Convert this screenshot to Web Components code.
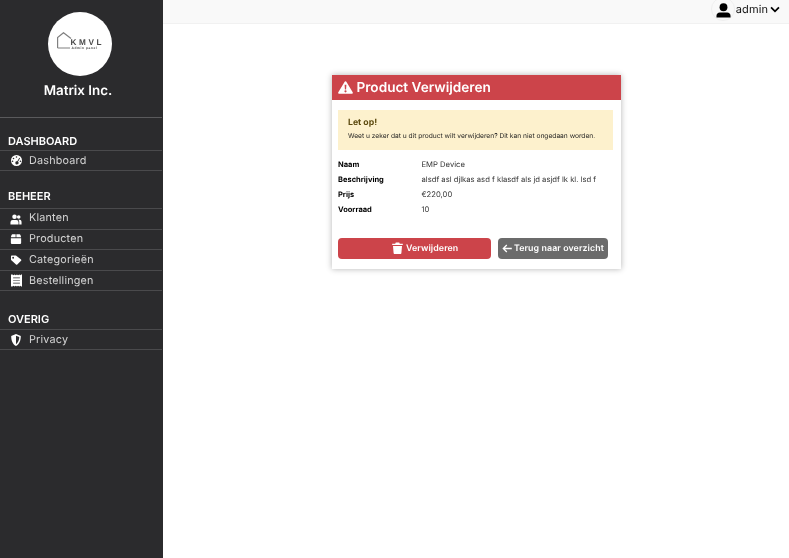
<!DOCTYPE html>
<html lang="nl"><head><meta charset="utf-8"><title>Product Verwijderen</title>
<style>
html,body{margin:0;height:100%;font-family:Inter,"Liberation Sans",sans-serif;background:#fff;overflow:hidden;text-rendering:geometricPrecision}
app-shell{height:558px;will-change:transform}
</style></head><body>
<app-shell>
  <side-bar slot="side">
    <nav-section title="DASHBOARD" style="--top:16px;--h:16px">
      <nav-row icon="gauge">Dashboard</nav-row>
    </nav-section>
    <nav-section title="BEHEER" style="--top:18px;--h:19px">
      <nav-row icon="users" style="--pb:2.400px">Klanten</nav-row>
      <nav-row icon="box">Producten</nav-row>
      <nav-row icon="tag">Categorieën</nav-row>
      <nav-row icon="receipt" style="--pb:0px">Bestellingen</nav-row>
    </nav-section>
    <nav-section title="OVERIG" style="--top:21px;--h:17px">
      <nav-row icon="shield" style="--pb:0px">Privacy</nav-row>
    </nav-section>
  </side-bar>
  <top-bar slot="top"></top-bar>
  <delete-card slot="main"></delete-card>
</app-shell>
<script>
const ICONS={
gauge:'<svg viewBox="1 1 14 14" width="11" height="11"><path fill="#fff" fill-rule="evenodd" d="M8 1a7 7 0 1 0 0 14A7 7 0 0 0 8 1zM8 2.600a1 1 0 1 1 0 2 1 1 0 0 1 0-2zM4.200 4.400a1 1 0 1 1 0 2 1 1 0 0 1 0-2zM3 8a1 1 0 1 1 0 2 1 1 0 0 1 0-2zm8.600-3.400.9.500-2.600 4.400a2 2 0 1 1-.9-.5zM13 8a1 1 0 1 1 0 2 1 1 0 0 1 0-2z"/></svg>',
users:'<svg viewBox="0 0 16 14" width="12" height="11"><g fill="#fff"><circle cx="6" cy="3.200" r="3"/><circle cx="11.600" cy="3.600" r="2.400"/><path d="M.6 13.600V10.500a3 3 0 0 1 3-3h4.800a3 3 0 0 1 3 3v3.100z"/><path d="M12.300 13.600V10c0-1.100-.4-2-1.200-2.800h1.600a2.700 2.700 0 0 1 2.700 2.700v3.700z"/></g></svg>',
box:'<svg viewBox="0 0 16 14" width="13" height="10"><g fill="#fff"><path d="M.8 6h14.400v6.500a1.500 1.500 0 0 1-1.500 1.500H2.300A1.500 1.500 0 0 1 .8 12.500z"/><path d="M3 .4h4.500v4.300H.9C1.100 2.600 2 .4 3 .4zM8.500.4H13c1 0 1.900 2.200 2.100 4.300H8.500z"/></g></svg>',
tag:'<svg viewBox="0 0 16 14" width="13" height="10"><path fill="#fff" fill-rule="evenodd" d="M1 1.800C1 1.200 1.400.8 2 .8h5.400c.4 0 .8.200 1 .4l6.700 5c.6.500.6 1.400 0 1.900l-5.300 5.100c-.5.500-1.300.5-1.800 0L1.500 7.500C1.200 7.200 1 6.800 1 6.400zm3 .8a1.300 1.300 0 1 0 0 2.600 1.300 1.300 0 0 0 0-2.600z"/></svg>',
receipt:'<svg viewBox="1 0 12 14" width="11" height="13"><path fill="#fff" fill-rule="evenodd" d="M1 .5h1.500L3.700 1.300 5 .5l1.200.8L7.500.5l1.200.8L10 .5l1.300.8L12 .5h1v13h-1l-.7-.8-1.300.8-1.300-.8-1.200.8-1.300-.8-1.200.8-1.300-.8-1.200.8H1zM3.300 3.800v.8h7.400v-.8zm0 2.800v.8h7.400v-.8zm0 2.800v.8h7.400v-.8z"/></svg>',
shield:'<svg viewBox="1 .5 12 15" width="10" height="12"><path fill="#fff" fill-rule="evenodd" d="M7 .5 13 3c0 5-1.500 10-6 12.500C2.500 13 1 8 1 3zM7 2.600v10.600c2.800-1.800 4-5 4.100-8.800z"/></svg>'
};
function def(name,html){customElements.define(name,class extends HTMLElement{
  connectedCallback(){if(this.shadowRoot)return;const r=this.attachShadow({mode:'open'});r.innerHTML=html(this);}
});}
def('app-shell',()=>`<style>
:host{display:grid;grid-template-columns:163px 1fr;grid-template-rows:24px 1fr;width:789px}
</style><slot name="side"></slot><slot name="top"></slot><slot name="main"></slot>`);
def('side-bar',()=>`<style>
:host{display:block;grid-row:1/3;background:#2b2b2d;height:558px;color:#fff;box-sizing:border-box}
.brand{display:flex;flex-direction:column;align-items:center;padding-top:12px;box-sizing:border-box;border-bottom:1px solid #5a5a5c;margin-right:1px;height:118px}
.logo{width:64px;height:64px;border-radius:50%;background:#fff;display:flex;align-items:center;justify-content:center;flex:none;margin-left:-2px}
.name{margin:6.500px 0 0 -6px;font-size:13.400px;font-weight:600;line-height:16px}
svg{display:block;margin-top:-4px}
svg text{font-family:"Liberation Sans",sans-serif}
</style>
<div class="brand"><div class="logo"><svg width="46" height="20" viewBox="0 0 46 20">
<path d="M.6 16V5.500L6.500.7 14 6.500M.6 16H13" fill="none" stroke="#808080" stroke-width="1.200"/>
<text x="13.500" y="13" font-size="8.200" font-weight="700" letter-spacing="2.600" fill="#4a4a4a">KMVL</text>
<text x="14.500" y="16.500" font-size="3.300" font-weight="700" letter-spacing=".55" fill="#4a4a4a">Admin panel</text>
</svg></div><div class="name">Matrix Inc.</div></div>
<slot></slot>`);
def('nav-section',h=>`<style>
:host{display:block;margin-top:var(--top);margin-right:1px}
.h{font-size:11px;font-weight:600;line-height:14px;padding-left:8px;height:var(--h);color:#fff}
.b{border-top:1px solid #4a4a4c}
</style><div class="h">${h.getAttribute('title')}</div><div class="b"><slot></slot></div>`);
def('nav-row',h=>`<style>
:host{display:flex;align-items:center;height:19.400px;box-sizing:content-box;border-bottom:1px solid #4a4a4c;padding-left:10px;font-size:10.800px;letter-spacing:.2px;color:#d4d4d4}
.i{width:12px;height:13px;display:flex;align-items:center;justify-content:center;margin-right:7px;flex:none}
.t{padding-bottom:var(--pb,1px)}
svg{display:block}
</style><span class="i">${ICONS[h.getAttribute('icon')]}</span><span class="t"><slot></slot></span>`);
def('top-bar',()=>`<style>
:host{display:flex;justify-content:flex-end;align-items:flex-start;height:24px;background:#f9f9f9;border-bottom:1px solid #f1f1f1;box-sizing:border-box;font-size:11px;color:#111;padding:2px 9px 0 0;overflow:hidden}
svg{display:block}
.av{width:24px;height:24px;box-sizing:border-box;margin-top:-5px;border:1px solid #efefef;border-radius:50%;display:flex;justify-content:center;padding-top:5px}
span.n{line-height:15px;letter-spacing:.1px;margin-left:.5px}
.c{margin:4px 0 0 2px}
</style><div class="av"><svg width="15" height="15" viewBox="1 0 15 16"><circle cx="8.500" cy="4.500" r="4.200"/><path d="M1 15.500v-2c0-2 1.500-3.500 3.500-3.500h8c2 0 3.500 1.500 3.500 3.500v2z"/></svg></div><span class="n">admin</span>
<svg class="c" width="10" height="7" viewBox="0 0 11 8"><path d="M1 1.500 5.500 6 10 1.500" fill="none" stroke="#000" stroke-width="2"/></svg>`);
def('delete-card',()=>`<style>
:host{display:block;width:289px;margin:51px 0 0 169px;background:#fff;box-shadow:0 0 6px rgba(0,0,0,.3);height:194px;box-sizing:border-box;color:#333}
.head{height:25px;background:#cc444a;color:#fff;display:flex;align-items:center;padding-left:6px;font-size:13.600px;font-weight:600;gap:3.500px}
.body{padding:10px 8px 0 6px}
.alert{background:#fdf1cd;height:40px;box-sizing:border-box;padding:6.500px 10px 0;color:#1a1a1a}
.alert b{display:block;font-size:8.700px;font-weight:700;line-height:12px;color:#5c4a0e}
.alert p{margin:2.500px 0 0;font-size:6.650px;line-height:10px}
.rows{display:grid;grid-template-columns:83.500px 1fr;margin-top:6.800px;font-size:7.670px}
.rows>*{height:15px;line-height:15px}
.rows b{font-weight:700;color:#000;font-size:7.500px}
.btns{display:flex;gap:7px;margin-top:21px}
.btn{height:21px;border-radius:4px;display:flex;align-items:center;color:#fff;font-size:8.800px;font-weight:600;letter-spacing:.1px}
.del{width:153px;background:#cc444a;box-sizing:border-box;padding-left:54px;gap:3px}
.back{width:110px;background:#6b6b6b;box-sizing:border-box;padding-left:4px;gap:2px}
svg{display:block}
</style>
<div class="head"><svg width="15" height="13" viewBox="0 0 15 13"><path fill="#fff" fill-rule="evenodd" d="M7.500.3c.4 0 .8.200 1 .6l6.200 10.300c.4.700-.1 1.600-1 1.600H1.300c-.9 0-1.400-.9-1-1.600L6.500.9c.2-.4.600-.6 1-.6zM6.600 3.800l.3 4.600h1.200l.3-4.600zM7.500 9.200a1.100 1.100 0 1 0 0 2.200 1.100 1.100 0 0 0 0-2.200z"/></svg><span>Product Verwijderen</span></div>
<div class="body">
<div class="alert"><b>Let op!</b><p>Weet u zeker dat u dit product wilt verwijderen? Dit kan niet ongedaan worden.</p></div>
<div class="rows"><b>Naam</b><span>EMP Device</span><b>Beschrijving</b><span>alsdf asl djlkas asd f klasdf als jd asjdf lk kl. lsd f</span><b>Prijs</b><span>€220,00</span><b>Voorraad</b><span>10</span></div>
<div class="btns"><div class="btn del"><svg width="11" height="12" viewBox="0 0 11 12"><path fill="#fff" d="M.2 1.700h3L3.800.5h3.400l.6 1.200h3v1.300H.2zM1 4h9l-.6 7c0 .5-.4 1-1 1H2.600c-.6 0-1-.5-1-1z"/></svg><span>Verwijderen</span></div>
<div class="btn back"><svg width="10" height="9" viewBox="0 0 10 9"><path d="M4.800 1 1.300 4.500 4.800 8M1.500 4.500H9.800" fill="none" stroke="#fff" stroke-width="1.300"/></svg><span>Terug naar overzicht</span></div></div>
</div>`);
</script>
</body></html>
